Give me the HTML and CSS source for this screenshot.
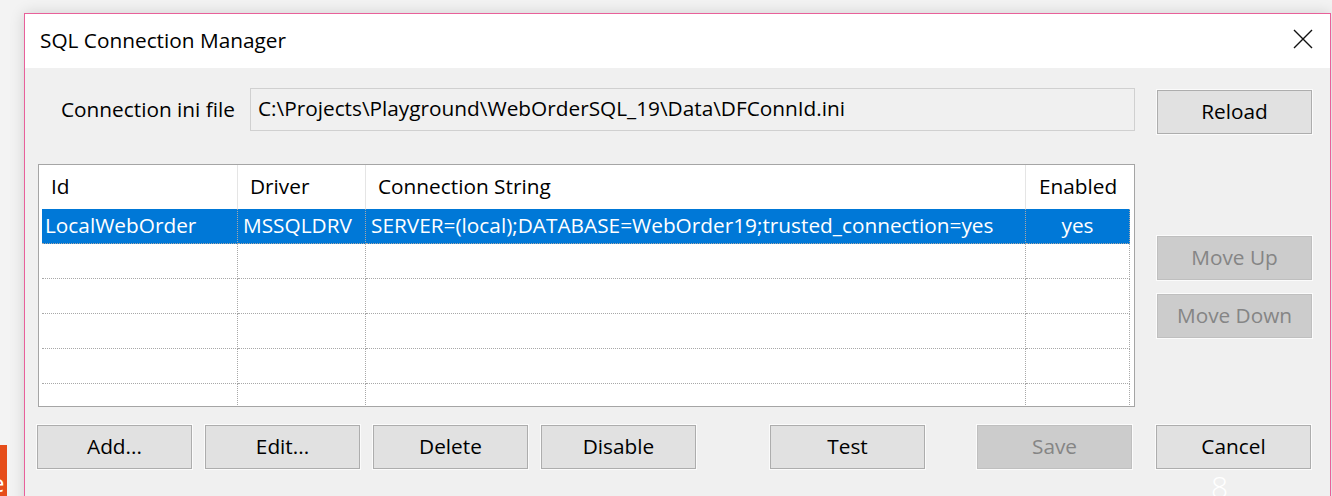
FILE: index.html
```html
<!DOCTYPE html>
<html lang="en">
<head>
<meta charset="utf-8">
<title>SQL Connection Manager</title>
<link rel="stylesheet" href="styles.css">
</head>
<body>
<div class="desk">
  <div class="slide-tab"><span>e</span></div>

  <div class="window">
    <div class="titlebar">
      <span class="title">SQL Connection Manager</span>
      <button class="close" aria-label="Close">
        <svg width="20" height="20" viewBox="0 0 20 20">
          <path d="M1 1 L19 19 M19 1 L1 19" stroke="#111" stroke-width="1.4" fill="none"/>
        </svg>
      </button>
    </div>

    <div class="body">
      <div class="file-row">
        <label class="file-label">Connection ini file</label>
        <div class="file-box">C:\Projects\Playground\WebOrderSQL_19\Data\DFConnId.ini</div>
        <button class="btn reload">Reload</button>
      </div>

      <div class="list-row">
        <div class="grid">
          <table class="conn-table">
            <colgroup>
              <col class="c-id"><col class="c-drv"><col class="c-str"><col class="c-en">
            </colgroup>
            <thead>
              <tr>
                <th>Id</th>
                <th>Driver</th>
                <th>Connection String</th>
                <th class="center">Enabled</th>
              </tr>
            </thead>
            <tbody>
              <tr class="selected">
                <td>LocalWebOrder</td>
                <td>MSSQLDRV</td>
                <td>SERVER=(local);DATABASE=WebOrder19;trusted_connection=yes</td>
                <td class="center">yes</td>
              </tr>
              <tr><td></td><td></td><td></td><td></td></tr>
              <tr><td></td><td></td><td></td><td></td></tr>
              <tr><td></td><td></td><td></td><td></td></tr>
              <tr><td></td><td></td><td></td><td></td></tr>
              <tr><td></td><td></td><td></td><td></td></tr>
            </tbody>
          </table>
        </div>
        <div class="side">
          <button class="btn" disabled>Move Up</button>
          <button class="btn" disabled>Move Down</button>
        </div>
      </div>

      <div class="actions">
        <button class="btn">Add...</button>
        <button class="btn">Edit...</button>
        <button class="btn">Delete</button>
        <button class="btn">Disable</button>
        <button class="btn test">Test</button>
        <button class="btn save" disabled>Save</button>
        <button class="btn cancel">Cancel</button>
      </div>
    </div>

    <span class="page-num">8</span>
  </div>
</div>
</body>
</html>
```

FILE: styles.css
```css
* {
  box-sizing: border-box;
}

html, body {
  margin: 0;
  padding: 0;
}

body {
  background: #f3f3f3;
  font-family: "Open Sans", "Noto Sans", "Liberation Sans", sans-serif;
  font-size: 20.8px;
  color: #000;
}

.desk {
  position: relative;
  width: 1332px;
  height: 496px;
  overflow: hidden;
  padding: 13px 0 0 24px;
}

/* orange slide tab peeking out behind the dialog */
.slide-tab {
  position: absolute;
  left: 0;
  top: 445px;
  width: 7px;
  height: 51px;
  background: #e64d1a;
  overflow: hidden;
}

.slide-tab span {
  position: absolute;
  left: -9px;
  top: 26px;
  color: #fff;
  font-size: 24px;
  line-height: 24px;
}

.window {
  position: relative;
  width: 1307px;
  height: 500px;
  border: 1px solid #e8609a;
  border-bottom: none;
  background: #f0f0f0;
  box-shadow: 0 0 14px rgba(0, 0, 0, 0.14);
}

.titlebar {
  height: 54px;
  background: #fff;
  display: flex;
  align-items: center;
  justify-content: space-between;
  padding: 0 17px 0 15px;
}

.title {
  margin-top: -3px;
}

.close {
  border: none;
  background: transparent;
  padding: 0;
  width: 20px;
  height: 20px;
  display: flex;
  margin-top: -4px;
}

.body {
  padding: 20px 18px 0 12px;
}

.file-row {
  display: flex;
  align-items: flex-start;
}

.file-label {
  width: 189px;
  margin-left: 24px;
  line-height: 42px;
  white-space: nowrap;
}

.file-box {
  width: 885px;
  height: 43px;
  border: 1px solid #d0d0d0;
  background: #f0f0f0;
  padding: 0 7px;
  line-height: 39px;
  white-space: nowrap;
  overflow: hidden;
}

.btn {
  font-family: inherit;
  font-size: 20.8px;
  color: #000;
  width: 155px;
  height: 44px;
  padding: 0 0 3px;
  border: 1px solid #adadad;
  background: #e1e1e1;
  box-shadow: 0 0 0 1px #fbfbfb;
  flex: none;
}

.btn:disabled {
  background: #cccccc;
  border-color: #bfbfbf;
  color: #858585;
}

.reload {
  margin-left: 22px;
  margin-top: 2px;
}

.list-row {
  display: flex;
  margin-top: 30px;
}

.grid {
  width: 1097px;
  height: 243px;
  margin-left: 1px;
  border: 1px solid #a5a5a5;
  background: #fff;
  overflow: hidden;
  padding: 0 2px 0 3px;
}

.conn-table {
  border-collapse: separate;
  border-spacing: 0;
  table-layout: fixed;
  width: 1088px;
}

.c-id { width: 196px; }
.c-drv { width: 128px; }
.c-str { width: 660px; }
.c-en { width: 104px; }

.conn-table th {
  height: 44px;
  font-weight: normal;
  text-align: left;
  padding: 0 0 3px 12px;
  border-right: 1px solid #e5e5e5;
  white-space: nowrap;
}

.conn-table th:first-child {
  padding-left: 9px;
}

.conn-table th:last-child {
  border-right: none;
}

.conn-table td {
  height: 35px;
  padding: 0 0 3px 5px;
  border-right: 1px dotted #a8a8a8;
  border-bottom: 1px dotted #a8a8a8;
  white-space: nowrap;
  overflow: hidden;
}

.conn-table td:first-child {
  padding-left: 3px;
}

.conn-table th.center,
.conn-table td.center {
  text-align: center;
  padding-left: 0;
}

.selected td {
  background: #0078d7;
  color: #fff;
}

.side {
  margin-left: 22px;
  padding-top: 72px;
  display: flex;
  flex-direction: column;
  gap: 14px;
}

.actions {
  display: flex;
  margin-top: 18px;
}

.actions .btn + .btn {
  margin-left: 13px;
}

.actions .test {
  margin-left: 74px !important;
}

.actions .save {
  margin-left: 52px !important;
}

.actions .cancel {
  margin-left: 24px !important;
}

.page-num {
  position: absolute;
  left: 1186px;
  top: 458px;
  color: #fff;
  font-size: 30px;
  font-weight: 300;
  line-height: 30px;
}
```
